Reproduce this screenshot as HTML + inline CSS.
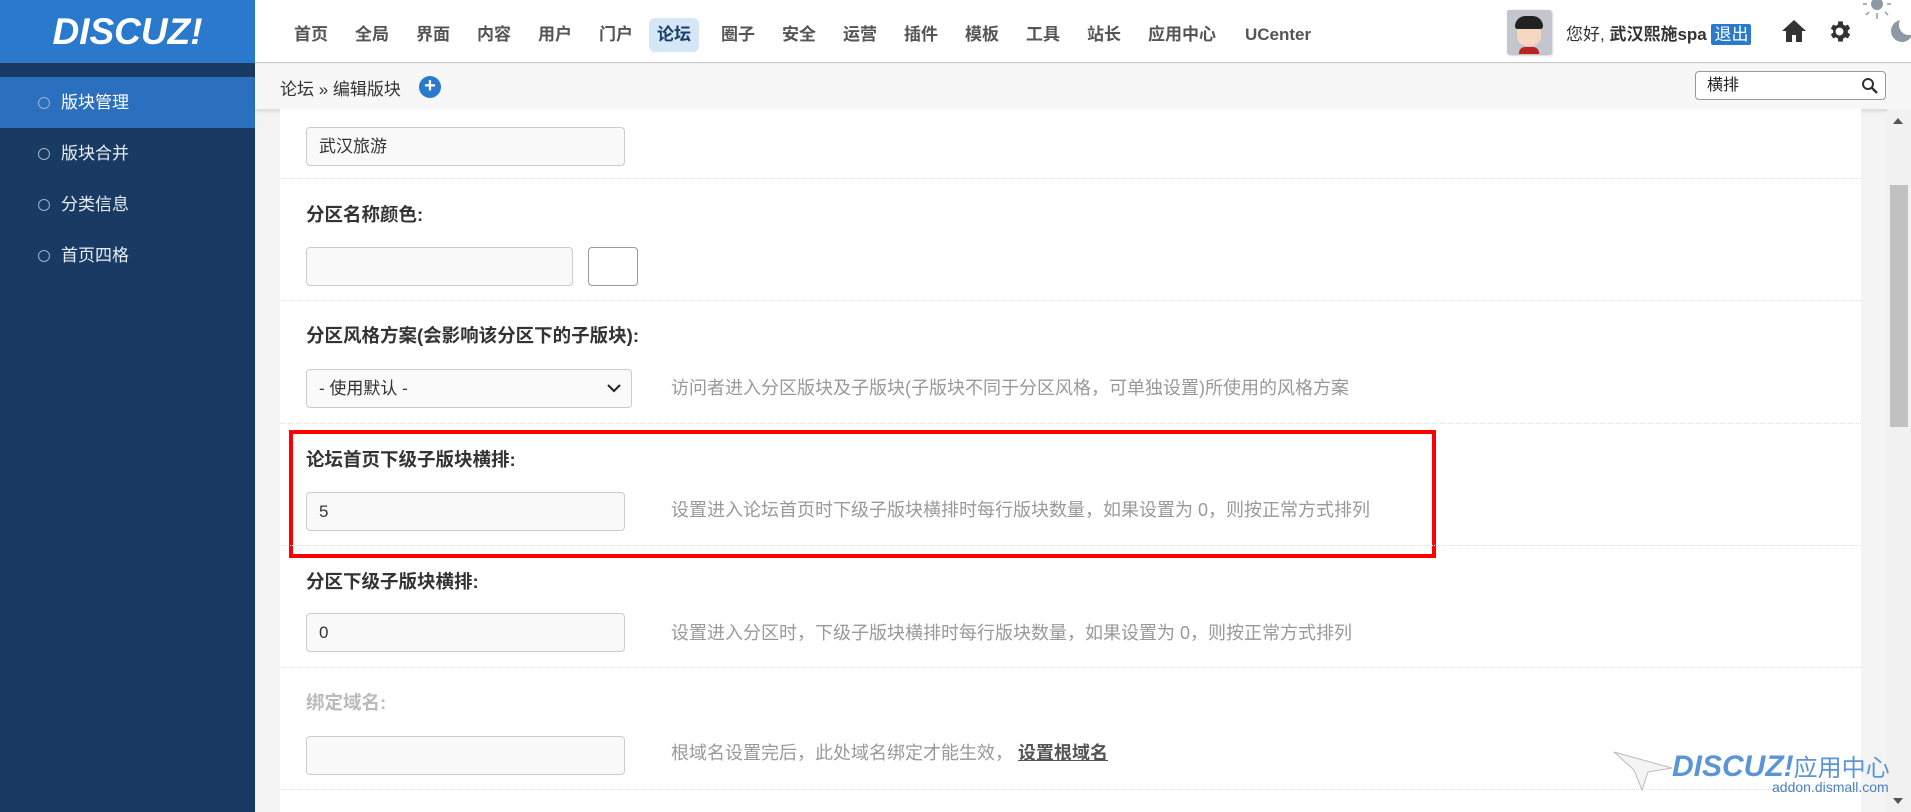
<!DOCTYPE html>
<html><head><meta charset="utf-8"><style>
*{margin:0;padding:0;box-sizing:border-box}
body{width:1911px;height:812px;overflow:hidden;background:#f3f3f3;font-family:"Liberation Sans","Noto Sans CJK SC",sans-serif;position:relative}
.side{position:absolute;left:0;top:0;width:255px;height:812px;background:#193a63}
.logo{height:63px;background:#2b79cc;color:#fff;font:italic bold 37px "Liberation Sans",sans-serif;text-align:center;line-height:63px;letter-spacing:0px}
.item{position:absolute;left:0;width:255px;height:51px;color:#e8eef6;font-size:17px;line-height:51px;padding-left:61px}
.item:before{content:"";position:absolute;left:38px;top:20px;width:10px;height:10px;border:1px solid #9fb3cc;border-radius:50%}
.item.on{background:#2b6fbf;color:#fff}
.top{position:absolute;left:255px;top:0;right:0;height:63px;background:#fff;border-bottom:1px solid #ccc}
.nav{position:absolute;top:18px;height:34px;line-height:28px;font-size:17px;font-weight:bold;color:#555;padding:3px 8px;border-radius:6px}
.crumb{position:absolute;left:255px;top:64px;right:0;height:45px;background:#f7f7f7;box-shadow:0 2px 4px rgba(0,0,0,.12)}
.main{position:absolute;left:280px;top:109px;width:1581px;height:703px;background:#fff}
.inp{position:absolute;height:39px;border:1px solid #ccc;border-radius:4px;background:#f9f9f9;font-size:17px;line-height:37px;padding-left:12px;color:#333}
.lbl{position:absolute;left:306px;font-size:18.5px;font-weight:bold;color:#333}
.hint{position:absolute;left:671px;font-size:18px;color:#999}
.hr{position:absolute;left:280px;width:1581px;border-top:1px dotted #e2e2e2}
</style></head><body>
<div class="side">
<div class="logo">DISCUZ!</div>
<div style="height:14px"></div>
<div class="item on" style="top:77px">版块管理</div>
<div class="item" style="top:128px">版块合并</div>
<div class="item" style="top:179px">分类信息</div>
<div class="item" style="top:230px">首页四格</div>
</div>
<div class="top">
<span class="nav" style="left:31px">首页</span><span class="nav" style="left:92px">全局</span><span class="nav" style="left:153px">界面</span><span class="nav" style="left:214px">内容</span><span class="nav" style="left:275px">用户</span><span class="nav" style="left:336px">门户</span><span class="nav" style="left:394px;background:#d5e6f7;color:#1b3f6b">论坛</span><span class="nav" style="left:458px">圈子</span><span class="nav" style="left:519px">安全</span><span class="nav" style="left:580px">运营</span><span class="nav" style="left:641px">插件</span><span class="nav" style="left:702px">模板</span><span class="nav" style="left:763px">工具</span><span class="nav" style="left:824px">站长</span><span class="nav" style="left:885px">应用中心</span><span class="nav" style="left:982px">UCenter</span>
<div style="position:absolute;left:1252px;top:10px;width:44px;height:44px;background:#c3c6cd;border-radius:2px;box-shadow:1px 1px 2px #aaa;overflow:hidden">
<div style="position:absolute;left:10px;top:10px;width:24px;height:26px;background:#f6d7c2;border-radius:10px"></div>
<div style="position:absolute;left:8px;top:6px;width:28px;height:13px;background:#222;border-radius:12px 12px 3px 3px"></div>
<div style="position:absolute;left:12px;top:37px;width:20px;height:10px;background:#b22;border-radius:6px 6px 0 0"></div></div>
<div style="position:absolute;left:1311px;top:20px;font-size:17px;color:#333">您好, <b>武汉熙施spa</b> <span style="background:#2b79cc;color:#fff;padding:1px 3px;border-radius:2px">退出</span></div>
<svg style="position:absolute;left:1526px;top:19px" width="26" height="24" viewBox="0 0 26 24"><path d="M13 1 L1 12 H5 V23 H11 V16 H15 V23 H21 V12 H25Z" fill="#333"/></svg>
<svg style="position:absolute;left:1571px;top:18px" width="27" height="27" viewBox="0 0 24 24"><path fill="#333" d="M19.4 13a7.5 7.5 0 0 0 0-2l2.1-1.6-2-3.5-2.5 1a7 7 0 0 0-1.7-1L14.9 3h-4l-.4 2.9a7 7 0 0 0-1.7 1l-2.5-1-2 3.5L6.4 11a7.5 7.5 0 0 0 0 2l-2.1 1.6 2 3.5 2.5-1a7 7 0 0 0 1.7 1l.4 2.9h4l.4-2.9a7 7 0 0 0 1.7-1l2.5 1 2-3.5zM12 15.5a3.5 3.5 0 1 1 0-7 3.5 3.5 0 0 1 0 7z"/></svg>
<svg style="position:absolute;left:1608px;top:-8px" width="28" height="28" viewBox="0 0 28 28"><circle cx="14" cy="12" r="6" fill="#8f99a6"/><g stroke="#8f99a6" stroke-width="1.5"><path d="M14 21v6M4 12h-4M24 12h4M6 20l-3 3M22 20l3 3M6 4l-3-3M22 4l3-3"/></g></svg>
<div style="position:absolute;left:1636px;top:20px;width:22px;height:22px;border-radius:50%;background:#8f99a6"></div>
<div style="position:absolute;left:1644px;top:15px;width:20px;height:20px;border-radius:50%;background:#fff"></div>
</div>
<div class="crumb">
<div style="position:absolute;left:25px;top:11px;font-size:17px;color:#333">论坛 » 编辑版块</div>
<div style="position:absolute;left:164px;top:12px;width:22px;height:22px;border-radius:50%;background:#2b79cc;color:#fff;font-weight:bold;font-size:20px;line-height:21px;text-align:center">+</div>
<div style="position:absolute;left:1440px;top:7px;width:191px;height:29px;border:1px solid #999;border-radius:4px;background:#fff;font-size:16px;line-height:27px;padding-left:11px;color:#222">横排
<svg style="position:absolute;right:6px;top:5px" width="18" height="18" viewBox="0 0 18 18"><circle cx="7" cy="7" r="5" stroke="#333" stroke-width="2" fill="none"/><path d="M11 11l5 5" stroke="#333" stroke-width="2.4"/></svg></div>
</div>
<div class="main"></div>
<div style="position:absolute;left:1887px;top:109px;width:24px;height:703px;background:#f1f1f1"></div>
<div style="position:absolute;left:1890px;top:185px;width:18px;height:242px;background:#c1c1c1"></div>
<div style="position:absolute;left:1893px;top:118px;border:5px solid transparent;border-bottom:6px solid #555;border-top:0"></div>

<div class="inp" style="left:306px;top:127px;width:319px">武汉旅游</div>
<div class="hr" style="top:178px"></div>
<div class="lbl" style="top:201px">分区名称颜色:</div>
<div class="inp" style="left:306px;top:247px;width:267px"></div>
<div class="inp" style="left:588px;top:247px;width:50px;background:#fff;border-color:#999"></div>
<div class="hr" style="top:300px"></div>
<div class="lbl" style="top:322px">分区风格方案(会影响该分区下的子版块):</div>
<div class="inp" style="left:306px;top:369px;width:326px;background:#fafafa">- 使用默认 -
<svg style="position:absolute;right:10px;top:14px" width="14" height="9" viewBox="0 0 14 9"><path d="M1 1l6 6 6-6" stroke="#222" stroke-width="2" fill="none"/></svg></div>
<div class="hint" style="top:374px">访问者进入分区版块及子版块(子版块不同于分区风格，可单独设置)所使用的风格方案</div>
<div class="hr" style="top:423px"></div>
<div style="position:absolute;left:289px;top:430px;width:1147px;height:128px;border:4px solid #f00"></div>
<div class="lbl" style="top:446px">论坛首页下级子版块横排:</div>
<div class="inp" style="left:306px;top:492px;width:319px">5</div>
<div class="hint" style="top:496px">设置进入论坛首页时下级子版块横排时每行版块数量，如果设置为 0，则按正常方式排列</div>
<div class="hr" style="top:545px"></div>
<div class="lbl" style="top:568px">分区下级子版块横排:</div>
<div class="inp" style="left:306px;top:613px;width:319px">0</div>
<div class="hint" style="top:619px">设置进入分区时，下级子版块横排时每行版块数量，如果设置为 0，则按正常方式排列</div>
<div class="hr" style="top:667px"></div>
<div class="lbl" style="top:689px;color:#bbb">绑定域名:</div>
<div class="inp" style="left:306px;top:736px;width:319px"></div>
<div class="hint" style="top:739px">根域名设置完后，此处域名绑定才能生效， <b style="color:#555;text-decoration:underline">设置根域名</b></div>
<div class="hr" style="top:789px"></div>
<svg style="position:absolute;left:1612px;top:750px" width="62" height="42" viewBox="0 0 62 42"><path d="M2 2 L60 18 L36 22 L30 40 L22 20Z" fill="#f4f4f4" stroke="#bbb"/></svg>
<div style="position:absolute;left:1672px;top:748px;font:italic bold 30px 'Liberation Sans',sans-serif;color:#5b95d6">DISCUZ!<span style="font:normal 24px 'Noto Sans CJK SC',sans-serif">应用中心</span></div>
<div style="position:absolute;left:1772px;top:779px;font-size:14px;color:#4a7fc0">addon.dismall.com</div>
<div style="position:absolute;left:1893px;top:798px;border:5px solid transparent;border-top:6px solid #555;border-bottom:0"></div>
</body></html>
